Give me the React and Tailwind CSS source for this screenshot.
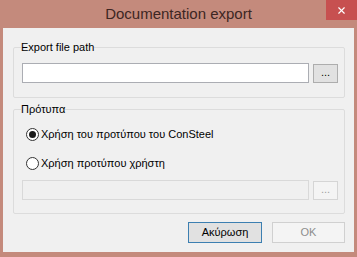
import { X } from "lucide-react";

function Group({ label, children, className = "" }) {
  return (
    <fieldset className={`ml-[10px] mr-[9px] rounded-[2px] border border-[#dcdcdc] pl-[8px] pr-[6px] ${className}`}>
      <legend className="-ml-[1px] px-0 text-[11px] leading-[16px] text-black">{label}</legend>
      {children}
    </fieldset>
  );
}

function PathRow({ disabled }) {
  return (
    <div className="flex items-start gap-[4px]">
      <div
        className={
          disabled
            ? "h-[20px] flex-1 border border-[#d9d9d9] bg-[#f0f0f0]"
            : "h-[20px] flex-1 border border-[#abadb3] bg-white"
        }
      />
      <button
        type="button"
        className={
          disabled
            ? "mt-[1px] flex h-[19px] w-[25px] items-center justify-center border border-[#d5d5d5] bg-[#f4f4f4] text-[11px] leading-none text-[#a0a0a0]"
            : "mt-[1px] flex h-[19px] w-[25px] items-center justify-center border border-[#adadad] bg-[#e1e1e1] text-[11px] leading-none text-black"
        }
      >
        <span className="-mt-[2px]">...</span>
      </button>
    </div>
  );
}

function Radio({ checked, label, className = "" }) {
  return (
    <div className={`flex items-center gap-[2px] pl-[4px] ${className}`}>
      <span className="flex h-[13px] w-[13px] items-center justify-center rounded-full border border-[#333333] bg-white">
        {checked && <span className="h-[7px] w-[7px] rounded-full bg-[#1a1a1a]" />}
      </span>
      <span className="text-[11px] leading-[16px] text-black">{label}</span>
    </div>
  );
}

export default function App() {
  return (
    <div
      className="flex h-[257px] w-[357px] flex-col bg-[#c48a7c] px-[3px] pb-[5px]"
      style={{ fontFamily: '"Liberation Sans", Arial, sans-serif' }}
    >
      <div className="relative flex h-[28px] shrink-0 items-center justify-center">
        <span className="pb-[1px] text-[15px] leading-none text-[#3d2623]">Documentation export</span>
        <div className="absolute -right-[3px] top-0 flex h-[20px] w-[31px] items-center justify-center bg-[#c75050]">
          <X size={11} strokeWidth={2.5} color="white" />
        </div>
      </div>
      <div className="flex flex-1 flex-col bg-[#f0f0f0] pt-[11px]">
        <Group label="Export file path" className="pb-[14px]">
          <div className="mt-[8px]">
            <PathRow />
          </div>
        </Group>
        <Group label="Πρότυπα" className="mt-[3px] pb-[13px]">
          <Radio checked label="Χρήση του προτύπου του ConSteel" className="mt-[9px]" />
          <Radio label="Χρήση προτύπου χρήστη" className="mt-[13px]" />
          <div className="mt-[9px]">
            <PathRow disabled />
          </div>
        </Group>
        <div className="mt-[8px] flex justify-end gap-[10px] pr-[9px]">
          <button
            type="button"
            className="h-[21px] w-[74px] border border-[#3c7fb1] bg-[#e1e1e1] text-[11px] leading-none text-black"
          >
            Ακύρωση
          </button>
          <button
            type="button"
            className="h-[21px] w-[73px] border border-[#d0d0d0] bg-[#f4f4f4] text-[11px] leading-none text-[#8d8d8d]"
          >
            OK
          </button>
        </div>
      </div>
    </div>
  );
}
